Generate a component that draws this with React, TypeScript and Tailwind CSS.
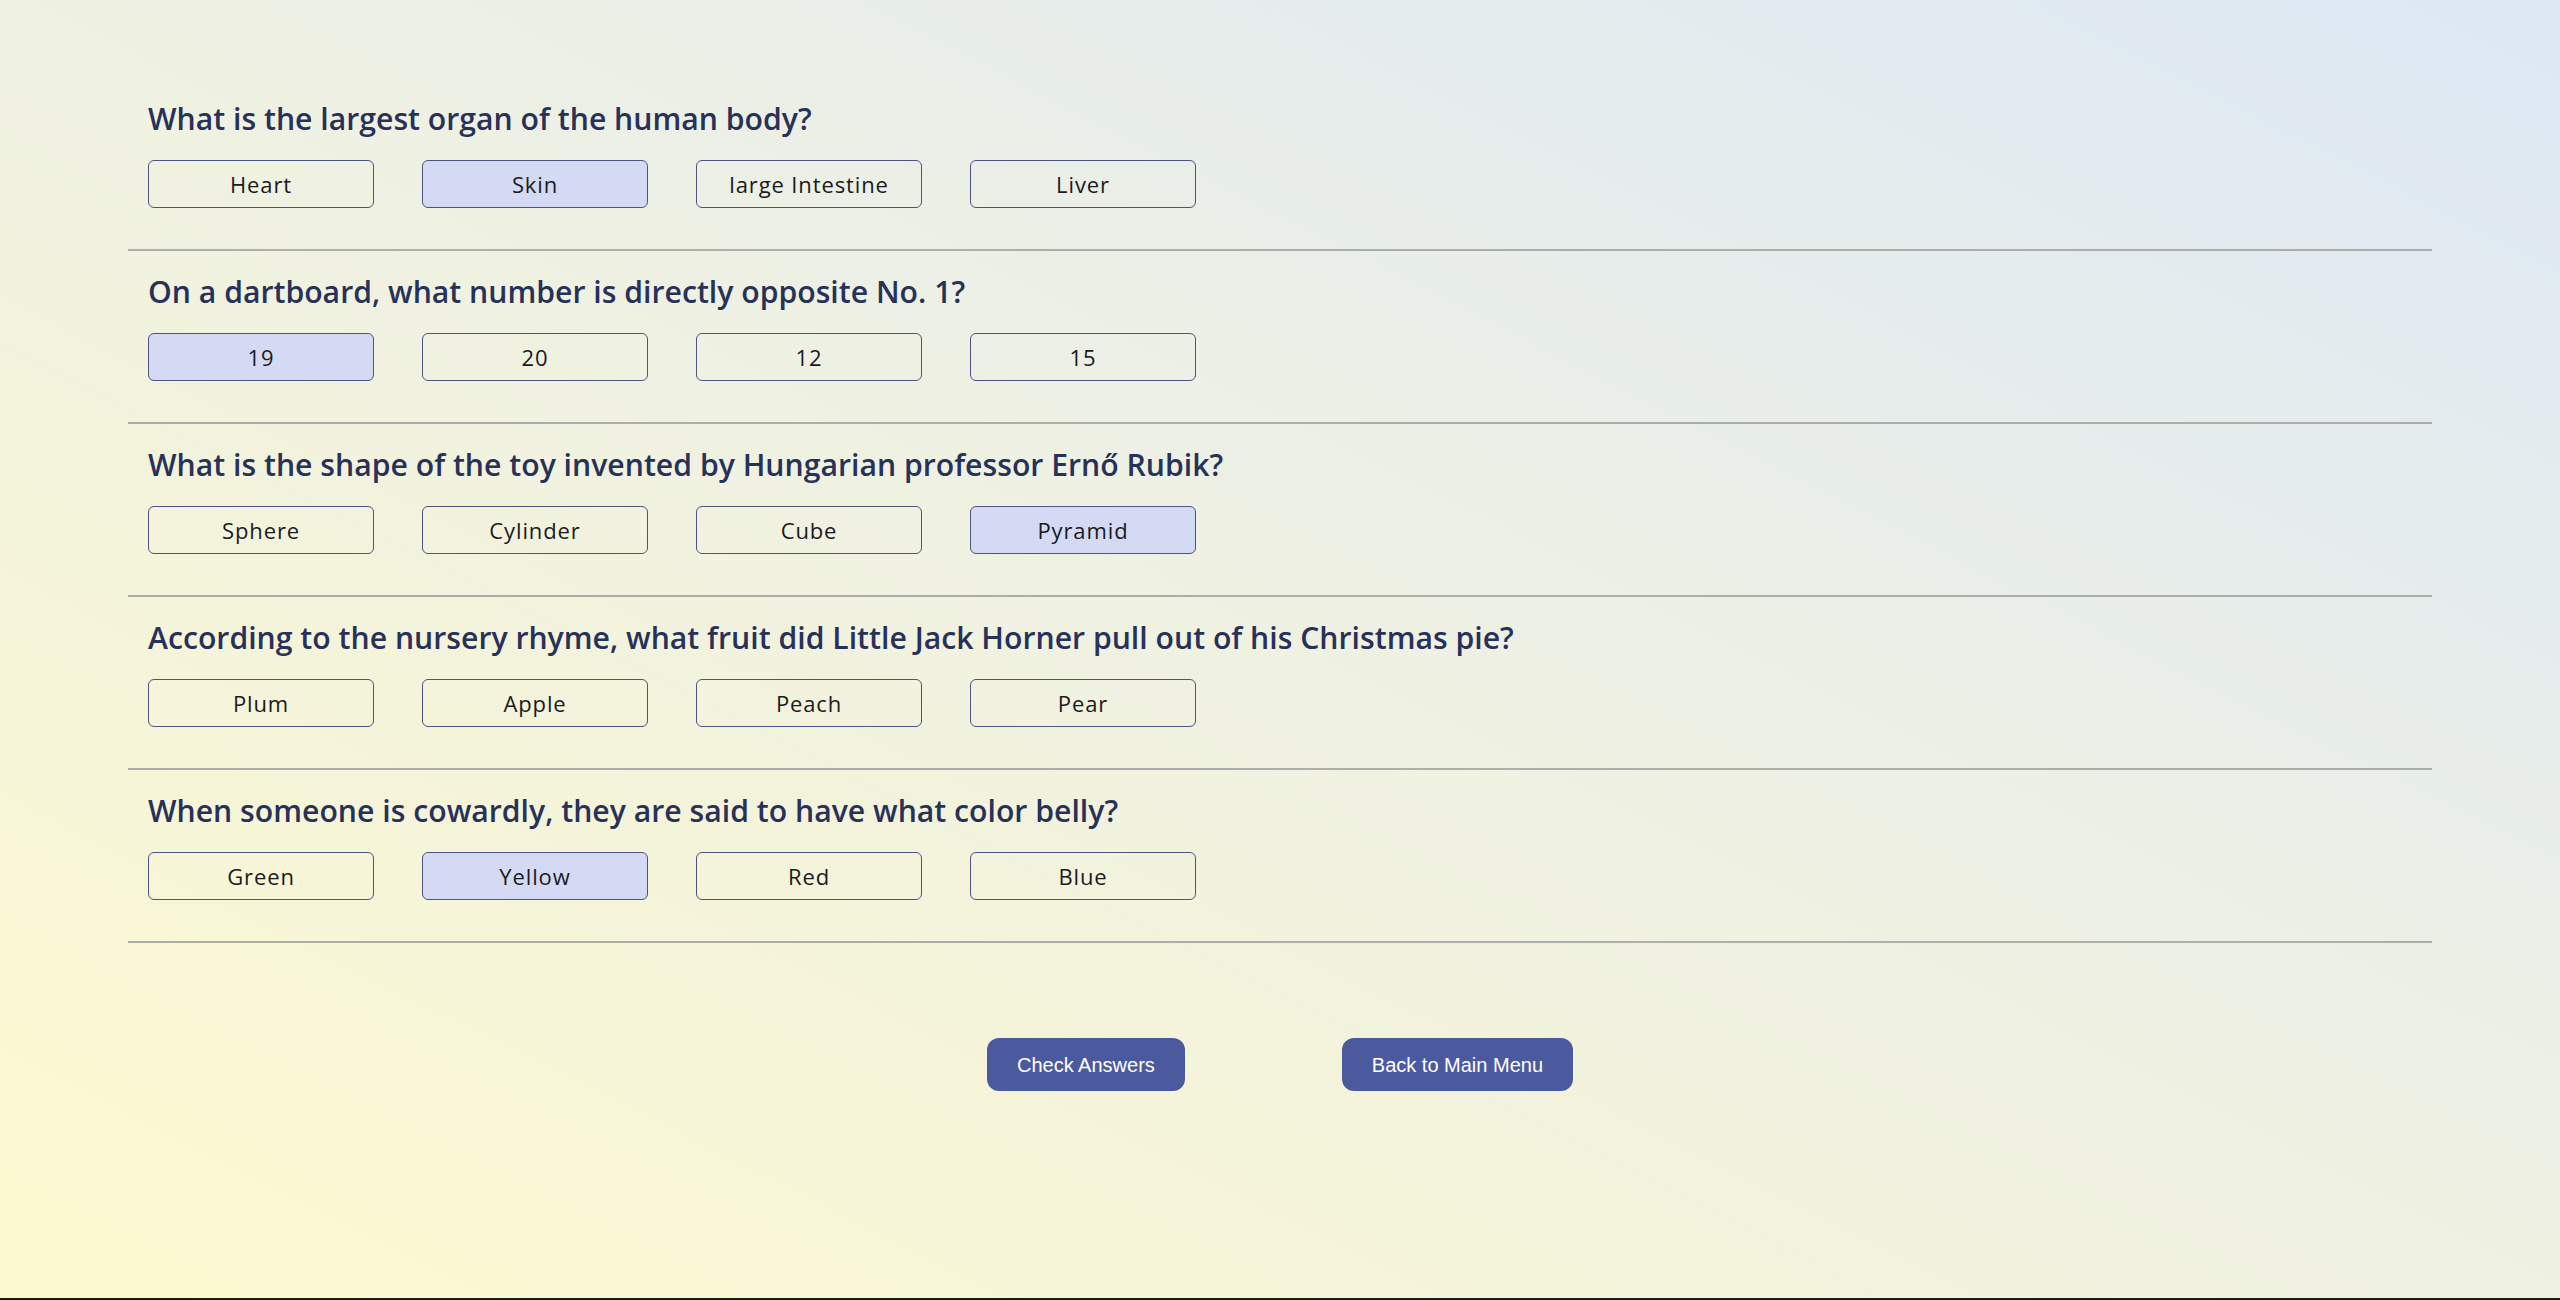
import React from 'react';

type Question = {
    text: string;
    options: string[];
    selected: number;
};

const questions: Question[] = [
    { text: 'What is the largest organ of the human body?', options: ['Heart', 'Skin', 'large Intestine', 'Liver'], selected: 1 },
    { text: 'On a dartboard, what number is directly opposite No. 1?', options: ['19', '20', '12', '15'], selected: 0 },
    { text: 'What is the shape of the toy invented by Hungarian professor Ernő Rubik?', options: ['Sphere', 'Cylinder', 'Cube', 'Pyramid'], selected: 3 },
    { text: 'According to the nursery rhyme, what fruit did Little Jack Horner pull out of his Christmas pie?', options: ['Plum', 'Apple', 'Peach', 'Pear'], selected: -1 },
    { text: 'When someone is cowardly, they are said to have what color belly?', options: ['Green', 'Yellow', 'Red', 'Blue'], selected: 1 },
];

const App: React.FC = () => {
    return (
        <div className="min-h-[1300px] border-b-2 border-[#1a1a1a] bg-gradient-to-tr from-[#fdf9cf] via-[#eff1e2] to-[#dde8f5]">
            <div className="w-[90%] mx-auto pt-[78px]">
                {questions.map((q, qi) => (
                    <div key={qi} className="px-5 pt-[21px] pb-[41px] border-b-2 border-[#abaea8]">
                        <h2 className="font-['Open_Sans',sans-serif] font-semibold text-[30.2px] leading-[40px] text-[#283158]">
                            {q.text}
                        </h2>
                        <div className="flex gap-[48px] mt-[21px]">
                            {q.options.map((opt, oi) => (
                                <button
                                    key={oi}
                                    className={
                                        'w-[226px] h-[48px] rounded-md border border-[#4d5382] text-[22px] tracking-[0.04em] text-[#1a1a20] font-["Open_Sans",sans-serif] ' +
                                        (oi === q.selected ? 'bg-[#d4daf4]' : 'bg-transparent')
                                    }
                                >
                                    {opt}
                                </button>
                            ))}
                        </div>
                    </div>
                ))}
            </div>

            <div className="flex justify-center gap-[157px] mt-[95px]">
                <button className="h-[53px] px-[30px] rounded-xl bg-[#4b5a9e] text-white text-[20px] font-['Liberation_Sans',Arial,sans-serif]">
                    Check Answers
                </button>
                <button className="h-[53px] px-[30px] rounded-xl bg-[#4b5a9e] text-white text-[20px] font-['Liberation_Sans',Arial,sans-serif]">
                    Back to Main Menu
                </button>
            </div>
        </div>
    );
};

export default App;
